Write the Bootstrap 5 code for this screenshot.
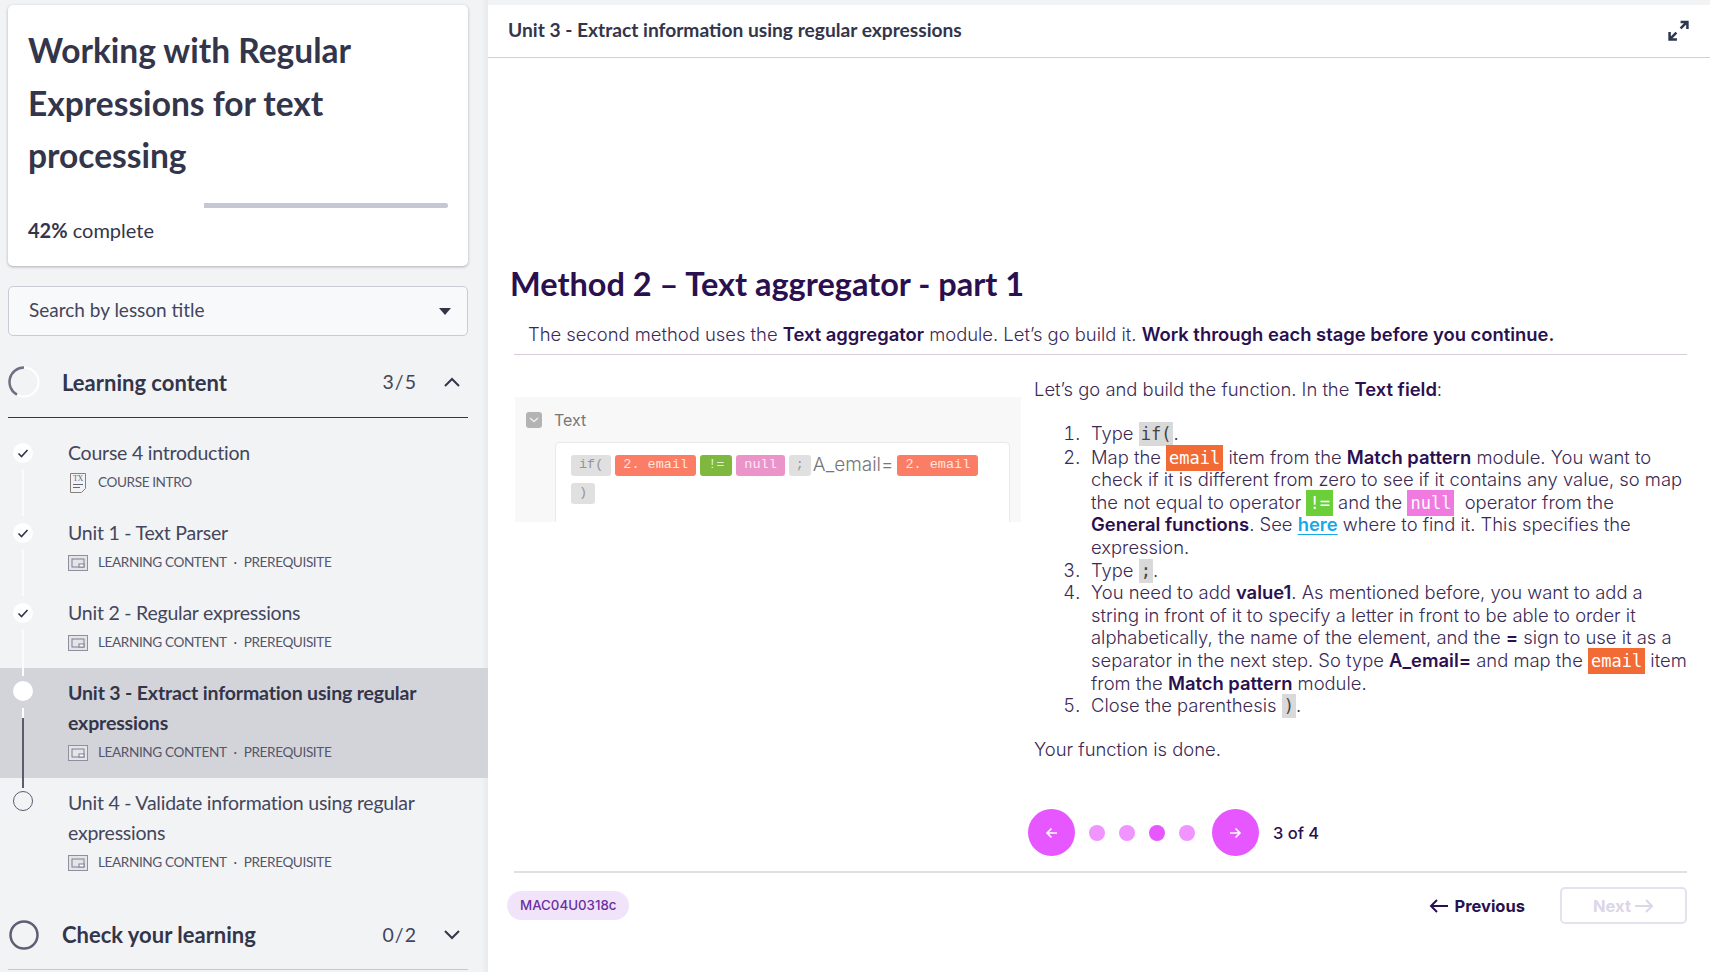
<!DOCTYPE html>
<html lang="en">
<head>
  <meta charset="UTF-8">
  <meta name="viewport" content="width=device-width, initial-scale=1.0">
  <title>Working with Regular Expressions</title>
  <link href="https://cdn.jsdelivr.net/npm/bootstrap@5.3.2/dist/css/bootstrap.min.css" rel="stylesheet">
  <script src="https://cdn.jsdelivr.net/npm/bootstrap@5.3.2/dist/js/bootstrap.bundle.min.js"></script>
  <style>
    html, body { height: 100%; }
    body {
      background-color: #f2f3f5;
      overflow: hidden;
      font-family: Lato, "Liberation Sans", sans-serif;
      color: #33354b;
    }
    .side-col {
      width: 488px;
      flex: none;
      height: 972px;
      overflow: hidden;
      background: linear-gradient(to right, #f2f3f5 481px, #e9eaec 488px);
    }
    .course-card {
      margin: 5px 20px 0 8px;
      height: 261px;
      padding: 19px 20px 0 20px;
      border: 0;
      border-radius: 5px;
      box-shadow: 0 1px 3px rgba(40, 42, 60, .35);
    }
    .course-title {
      font-size: 33.5px;
      line-height: 52.5px;
      font-weight: 700;
      color: #33354b;
      margin: 0;
    }
    .course-bar {
      height: 5px;
      margin-top: 21px;
      background: #f7f7f9;
      border-radius: 3px;
      display: flex;
      overflow: hidden;
    }
    .course-bar-done { background: #fff; }
    .course-bar-left { background: #c5c7d2; }
    .course-pct { font-size: 20px; margin-top: 8px; line-height: 28px; }
    .course-pct b { font-weight: 700; }
    .lesson-search {
      margin: 20px 20px 0 8px;
      height: 50px;
      padding: 0 16px 1px 20px;
      border: 1px solid #c9cbd5;
      border-radius: 5px;
      background: #f8f9fb;
      font-size: 19px;
      color: #43455b;
    }
    .search-caret {
      border-left: 6px solid transparent;
      border-right: 6px solid transparent;
      border-top: 7px solid #33354b;
      margin-top: 1px;
    }
    .group-head {
      margin: 11px 20px 0 8px;
      height: 71px;
      border-bottom: 1px solid #33354b;
    }
    .group-head.is-last { margin-top: 12px; height: 70px; border-bottom-color: #c5c7d2; }
    .group-ring { width: 32px; height: 32px; flex: none; margin-right: 22px; }
    .group-name { font-size: 22px; font-weight: 700; color: #33354b; }
    .group-count { font-size: 19.5px; letter-spacing: 1px; margin-right: 27px; color: #43455b; }
    .group-chev { margin-right: 8px; }
    .lesson-list { margin-top: 10px; }
    .lesson-row { padding: 10px 20px 10px 13px; }
    .lesson-row.is-current { background: #d3d4d9; }
    .lesson-rail { width: 20px; flex: none; margin-right: 35px; }
    .rail-dot {
      width: 20px;
      height: 20px;
      flex: none;
      margin-top: 5px;
      border-radius: 50%;
      background: #fff;
      display: flex;
    }
    .is-current .rail-dot, .rail-dot.is-open { margin-top: 3px; }
    .rail-dot.is-open { background: transparent; border: 1px solid #5a5c72; }
    .rail-line {
      width: 2px;
      flex: 1;
      margin: 6px 0 -18px;
      background: #fbfbfc;
    }
    .is-current .rail-line {
      margin: 7px 0 -20px;
      background: linear-gradient(to bottom, #fff 10px, #5a5c72 10px);
    }
    .lesson-title { font-size: 19.5px; line-height: 30px; letter-spacing: -.23px; color: #44465c; }
    .is-current .lesson-title { font-weight: 700; letter-spacing: -.15px; color: #33354b; }
    .lesson-meta { height: 29px; margin-bottom: 1px; font-size: 13.6px; letter-spacing: -.4px; color: #54566a; text-transform: uppercase; }
    .meta-icon { width: 20px; height: 16px; flex: none; margin-right: 10px; }
    .meta-icon.is-doc { height: 20px; }
    .meta-sep { margin: 0 7px; }

    .main-col {
      flex: 1;
      margin-top: 5px;
      height: 967px;
      background: #fff;
      overflow: hidden;
      font-family: Inter, "Liberation Sans", sans-serif;
      font-size: 18.4px;
      font-weight: 300;
      color: #3a2a55;
    }
    .top-bar {
      height: 53px;
      padding: 0 21px 2px 20px;
      border-bottom: 1px solid #cfd0d6;
      font-family: Lato, "Liberation Sans", sans-serif;
      font-size: 19.2px;
      font-weight: 700;
      color: #33354b;
    }
    .method-title {
      margin: 206px 0 0 22px;
      font-family: Lato, "Liberation Sans", sans-serif;
      font-size: 32.5px;
      line-height: 40px;
      font-weight: 700;
      color: #2b1050;
    }
    .method-intro {
      margin: 19px 23px 0 26px;
      padding: 0 0 8px 14px;
      line-height: 23px;
      border-bottom: 1px solid #d8ced8;
    }
    .method-intro b, .step-text b { font-weight: 600; color: #2b1050; }
    .method-cols { margin: 23px 0 0 27px; gap: 13px; }
    .shot {
      width: 506px;
      height: 125px;
      margin-top: 19px;
      padding: 11px 11px 0 11px;
      flex: none;
      background: #f8f8f8;
      overflow: hidden;
    }
    .shot-check {
      width: 16px;
      height: 16px;
      margin-right: 12px;
      border-radius: 3px;
      background: #b3b3b3;
    }
    .shot-label { font-family: Inter, "Liberation Sans", sans-serif; font-size: 16px; font-weight: 400; color: #777; }
    .shot-box {
      margin: 10px 0 0 29px;
      padding: 12px 15px 30px;
      height: 100px;
      gap: 7px 4px;
      background: #fff;
      border: 1px solid #eaeaea;
      border-radius: 4px;
    }
    .shot-pill {
      height: 21px;
      padding: 0 8px;
      border-radius: 3px;
      font-family: "Liberation Mono", monospace;
      font-size: 13.5px;
      font-weight: 400;
      line-height: 19px;
      color: #fff;
      opacity: .92;
    }
    .shot-pill.is-tight { padding: 0 7px; }
    .shot-grey { background: #dedede; color: #8d8d8d; }
    .shot-red { background: #fb7359; color: #ffe3dc; }
    .shot-green { background: #74b32f; color: #dff0cc; }
    .shot-pink { background: #ea8bc6; color: #fde6f4; }
    .shot-raw { font-size: 19px; line-height: 20px; margin-left: -2px; color: #777; font-weight: 300; }
    .step-text { width: 656px; flex: none; line-height: 22.6px; }
    .step-text p { margin: 0; }
    .step-list { margin: 21px 0 21px; padding-left: 57px; }
    .step-list li:first-child { margin-bottom: 1.5px; }
    .step-list li::marker { content: counter(list-item) ".\2002\200A"; }
    .tok {
      font-family: "DejaVu Sans Mono", "Liberation Mono", monospace;
      font-size: 17px;
      font-weight: 400;
      line-height: 1;
      padding: 2px 2px;
    }
    .tok-grey { background: #d9d9d9; color: #444; }
    .tok-orange { background: #f26b35; color: #fff; padding: 3px 3px; }
    .tok-green { background: #6bcf3a; color: #fff; padding: 3px 3px; }
    .tok-pink { background: #f07ae0; color: #fff; padding: 3px 3px; }
    .step-link { color: #14a9e8; font-weight: 600; text-decoration: underline; text-underline-offset: 3px; }
    .pager { margin: 49px 0 0 540px; height: 47px; }
    .pager-btn {
      width: 47px;
      height: 47px;
      flex: none;
      border-radius: 50%;
      background: #e657ff;
    }
    .pager-next { margin-left: 17px; }
    .pager-dot {
      width: 16px;
      height: 16px;
      margin-left: 14px;
      border-radius: 50%;
      background: #f095ff;
    }
    .pager-dot.is-on { background: #e657ff; }
    .pager-text { margin-left: 14px; font-weight: 500; color: #2b1050; font-size: 16.5px; }
    .foot-line { margin: 15px 23px 0 26px; height: 2px; background: #e3dfe0; }
    .foot-row { margin: 14px 23px 0 19px; height: 37px; }
    .code-chip {
      height: 29px;
      padding: 0 13px;
      border-radius: 15px;
      background: #f1e4fa;
      color: #6b2fa0;
      font-size: 13.3px;
      font-weight: 500;
    }
    .prev-link { font-weight: 700; color: #2b1050; margin-right: 35px; font-size: 16.5px; gap: 6px; }
    .next-btn {
      width: 127px;
      height: 37px;
      border: 2px solid #e6e1ee;
      border-radius: 5px;
      color: #dcd6e8;
      font-weight: 700;
      font-size: 16.5px;
    }
  </style>
</head>
<body>
  <svg width="0" height="0" class="position-absolute">
    <symbol id="i-slide" viewBox="0 0 20 16">
      <rect x=".5" y=".5" width="19" height="15" fill="#e4e5e9" stroke="#8e90a0"/>
      <rect x="4" y="4" width="12" height="8" fill="none" stroke="#7d7f90"/>
      <rect x="11" y="9" width="5" height="3" fill="#fff" stroke="#7d7f90"/>
    </symbol>
    <symbol id="i-doc" viewBox="0 0 20 20">
      <path d="M2.500 .5h15v15l-4 4h-11z" fill="#f2f3f5" stroke="#8a7f80"/>
      <text x="5" y="8" font-size="8" font-family="Liberation Serif" fill="#66687a">Tx</text>
      <path d="M5 11.500h10M5 14.500h7" stroke="#66687a"/>
    </symbol>
    <symbol id="i-check" viewBox="0 0 20 20">
      <path d="M5.500 10.500l3 3 6-6.500" fill="none" stroke="#33354b" stroke-width="1.600"/>
    </symbol>
  </svg>

  <div class="d-flex">
    <aside class="side-col">
      <div class="card course-card">
        <h1 class="course-title">Working with Regular Expressions for text processing</h1>
        <div class="course-bar">
          <div class="course-bar-done" style="width: 42%"></div>
          <div class="course-bar-left flex-grow-1"></div>
        </div>
        <div class="course-pct"><b>42%</b> complete</div>
      </div>

      <div class="lesson-search d-flex align-items-center justify-content-between">
        <span>Search by lesson title</span>
        <span class="search-caret"></span>
      </div>

      <div class="group-head d-flex align-items-center">
        <svg class="group-ring" viewBox="0 0 32 32">
          <circle cx="16" cy="16" r="14.500" fill="none" stroke="#fff" stroke-width="2"/>
          <path d="M9 28.700A14.500 14.500 0 0 1 16 1.500" fill="none" stroke="#6d6f82" stroke-width="2.500"/>
        </svg>
        <span class="group-name flex-grow-1">Learning content</span>
        <span class="group-count">3/5</span>
        <svg class="group-chev" width="16" height="10" viewBox="0 0 16 10"><path d="M1 9l7-7 7 7" fill="none" stroke="#33354b" stroke-width="2"/></svg>
      </div>

      <div class="lesson-list" id="lesson-list"></div>

      <div class="group-head is-last d-flex align-items-center">
        <svg class="group-ring" viewBox="0 0 32 32"><circle cx="16" cy="16" r="13.500" fill="none" stroke="#5d5f74" stroke-width="2.500"/></svg>
        <span class="group-name flex-grow-1">Check your learning</span>
        <span class="group-count">0/2</span>
        <svg class="group-chev" width="16" height="10" viewBox="0 0 16 10"><path d="M1 1l7 7 7-7" fill="none" stroke="#33354b" stroke-width="2"/></svg>
      </div>
    </aside>

    <main class="main-col">
      <div class="top-bar d-flex align-items-center justify-content-between">
        <span>Unit 3 - Extract information using regular expressions</span>
        <svg width="21" height="21" viewBox="0 0 20 20"><path d="M12 8l6-6M12 2h6.500v6.500M8 12l-6 6M1.500 11.500v7h7" fill="none" stroke="#2f3650" stroke-width="2.400"/></svg>
      </div>

      <h2 class="method-title">Method 2 – Text aggregator - part 1</h2>
      <div class="method-intro">The second method uses the <b>Text aggregator</b> module. Let’s go build it. <b>Work through each stage before you continue.</b></div>

      <div class="method-cols d-flex align-items-start">
        <div class="shot">
          <div class="d-flex align-items-center">
            <span class="shot-check d-flex align-items-center justify-content-center">
              <svg width="10" height="6" viewBox="0 0 10 6"><path d="M1 1l4 3.500L9 1" fill="none" stroke="#eee" stroke-width="1.500"/></svg>
            </span>
            <span class="shot-label">Text</span>
          </div>
          <div class="shot-box d-flex flex-wrap align-content-start">
            <span class="shot-pill shot-grey">if(</span>
            <span class="shot-pill shot-red">2. email</span>
            <span class="shot-pill shot-green">!=</span>
            <span class="shot-pill shot-pink">null</span>
            <span class="shot-pill shot-grey is-tight">;</span>
            <span class="shot-raw">A_email=</span>
            <span class="shot-pill shot-red">2. email</span>
            <span class="shot-pill shot-grey">)</span>
          </div>
        </div>

        <div class="step-text">
          <p>Let’s go and build the function. In the <b>Text field</b>:</p>
          <ol class="step-list">
            <li>Type <span class="tok tok-grey">if(</span>.</li>
            <li>Map the <span class="tok tok-orange">email</span> item from the <b>Match pattern</b> module. You want to check if it is different from zero to see if it contains any value, so map the not equal to operator <span class="tok tok-green">!=</span> and the <span class="tok tok-pink">null</span> &nbsp;operator from the <b>General&nbsp;functions</b>. See <a class="step-link" href="#">here</a> where to find it. This specifies the expression.</li>
            <li>Type <span class="tok tok-grey">;</span>.</li>
            <li>You need to add <b>value1</b>. As mentioned before, you want to add a string in front of it to specify a letter in front to be able to order it alphabetically, the name of the element, and the <b>=</b> sign to use it as a separator in the next step. So type <b>A_email=</b> and map the <span class="tok tok-orange">email</span> item from the <b>Match pattern</b> module.</li>
            <li>Close the parenthesis <span class="tok tok-grey">)</span>.</li>
          </ol>
          <p>Your function is done.</p>
        </div>
      </div>

      <div class="pager d-flex align-items-center">
        <span class="pager-btn d-flex align-items-center justify-content-center">
          <svg width="13" height="12" viewBox="0 0 13 12"><path d="M12 6H2M6.500 1.500L2 6l4.500 4.500" fill="none" stroke="#fff" stroke-width="1.600"/></svg>
        </span>
        <span class="pager-dot"></span>
        <span class="pager-dot"></span>
        <span class="pager-dot is-on"></span>
        <span class="pager-dot"></span>
        <span class="pager-btn pager-next d-flex align-items-center justify-content-center">
          <svg width="13" height="12" viewBox="0 0 13 12"><path d="M1 6h10M6.500 1.500L11 6l-4.500 4.500" fill="none" stroke="#fff" stroke-width="1.600"/></svg>
        </span>
        <span class="pager-text">3 of 4</span>
      </div>

      <div class="foot-line"></div>

      <div class="foot-row d-flex align-items-center">
        <span class="code-chip d-flex align-items-center">MAC04U0318c</span>
        <span class="prev-link ms-auto d-flex align-items-center">
          <svg width="19" height="14" viewBox="0 0 19 14"><path d="M19 7H2M8 1L2 7l6 6" fill="none" stroke="#2b1050" stroke-width="2"/></svg>
          Previous
        </span>
        <span class="next-btn d-flex align-items-center justify-content-center gap-1">
          Next
          <svg width="19" height="14" viewBox="0 0 19 14"><path d="M0 7h17M11 1l6 6-6 6" fill="none" stroke="#dcd6e8" stroke-width="2"/></svg>
        </span>
      </div>
    </main>
  </div>

  <script>
    const lessons = [
      { title: 'Course 4 introduction', kind: 'intro', state: 'done' },
      { title: 'Unit 1 - Text Parser', kind: 'slide', state: 'done' },
      { title: 'Unit 2 - Regular expressions', kind: 'slide', state: 'done' },
      { title: 'Unit 3 - Extract information using regular expressions', kind: 'slide', state: 'current' },
      { title: 'Unit 4 - Validate information using regular expressions', kind: 'slide', state: 'open' }
    ];

    const list = document.getElementById('lesson-list');

    lessons.forEach((lesson, i) => {
      const row = document.createElement('div');
      row.className = 'lesson-row d-flex' + (lesson.state === 'current' ? ' is-current' : '');
      const check = lesson.state === 'done' ? '<svg width="20" height="20"><use href="#i-check"/></svg>' : '';
      const meta = lesson.kind === 'intro'
        ? '<svg class="meta-icon is-doc"><use href="#i-doc"/></svg>Course intro'
        : '<svg class="meta-icon"><use href="#i-slide"/></svg>Learning content<span class="meta-sep">·</span>Prerequisite';
      row.innerHTML = `
        <div class="lesson-rail d-flex flex-column align-items-center">
          <div class="rail-dot ${lesson.state === 'open' ? 'is-open' : ''}">${check}</div>
          ${i < lessons.length - 1 ? '<div class="rail-line"></div>' : ''}
        </div>
        <div class="flex-grow-1">
          <div class="lesson-title">${lesson.title}</div>
          <div class="lesson-meta d-flex align-items-center">${meta}</div>
        </div>
      `;
      list.appendChild(row);
    });
  </script>
</body>
</html>
